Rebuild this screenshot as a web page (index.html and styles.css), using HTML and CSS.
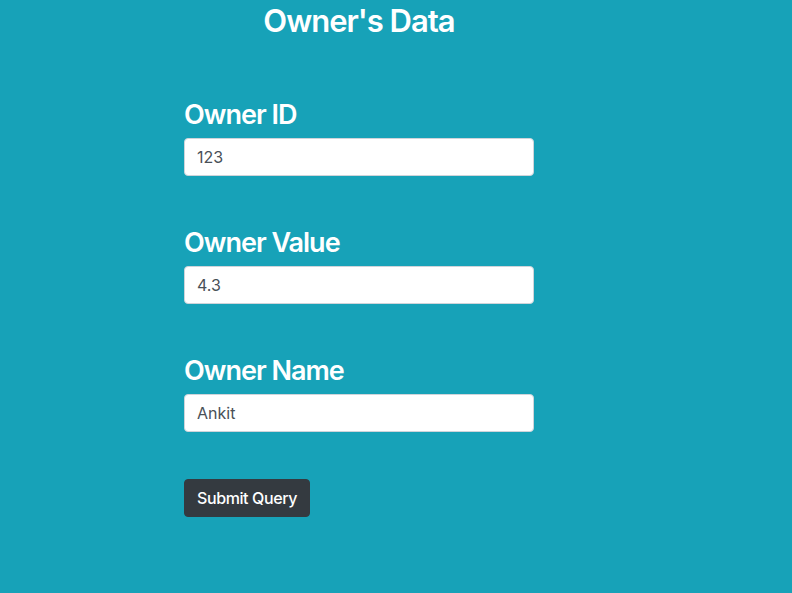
FILE: index.html
```html
<!DOCTYPE html>
<html>
<head>
<meta charset="utf-8">
<link rel="stylesheet" href="styles.css">
</head>
<body>
<div class="page">
  <h2 class="title">Owner's Data</h2>
  <form class="form">
    <div class="field">
      <label class="label">Owner ID</label>
      <input class="input" type="text" value="123">
    </div>
    <div class="field">
      <label class="label">Owner Value</label>
      <input class="input" type="text" value="4.3">
    </div>
    <div class="field">
      <label class="label">Owner Name</label>
      <input class="input" type="text" value="Ankit">
    </div>
    <div class="actions">
      <button class="btn" type="button">Submit Query</button>
    </div>
  </form>
</div>
</body>
</html>
```

FILE: styles.css
```css
html, body {
  margin: 0;
  padding: 0;
  height: 100%;
}
body {
  background: #17a2b8;
  font-family: Inter, "Liberation Sans", sans-serif;
  color: #fff;
}
.page {
  width: 350px;
  padding-left: 184px;
  padding-top: 2px;
}
.title {
  margin: 0;
  font-size: 31px;
  font-weight: 600;
  line-height: 1.2;
  text-align: center;
  letter-spacing: -1px;
}
.form {
  display: flex;
  flex-direction: column;
  gap: 50px;
  margin-top: 59px;
}
.field {
  display: flex;
  flex-direction: column;
  gap: 6px;
}
.label {
  display: block;
  font-size: 27px;
  font-weight: 600;
  line-height: 34px;
  letter-spacing: -1px;
}
.input {
  box-sizing: border-box;
  width: 350px;
  height: 38px;
  margin: 0;
  padding: 6px 12px;
  border: 1px solid #ced4da;
  border-radius: 4px;
  background: #fff;
  font-family: Inter, "Liberation Sans", sans-serif;
  font-size: 16px;
  color: #495057;
  outline: none;
}
.actions {
  display: flex;
  margin-top: -3px;
}
.btn {
  box-sizing: border-box;
  height: 38px;
  padding: 6px 12px;
  border: 1px solid #343a40;
  border-radius: 4px;
  background: #343a40;
  color: #fff;
  font-family: Inter, "Liberation Sans", sans-serif;
  font-size: 16px;
  font-weight: 500;
  letter-spacing: -0.4px;
}
```
